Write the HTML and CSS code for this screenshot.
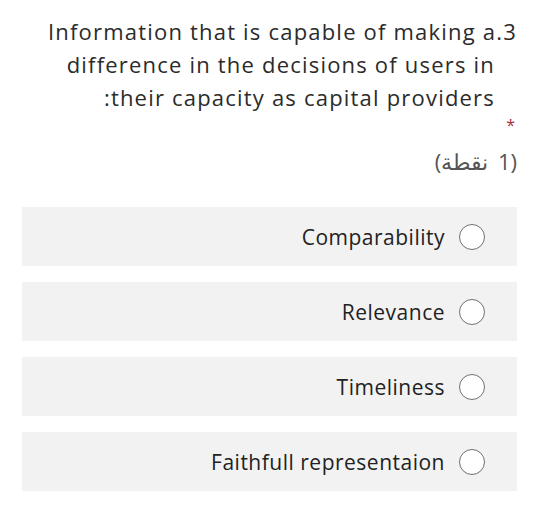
FILE: index.html
```html
<!DOCTYPE html>
<html lang="ar" dir="rtl">
<head>
<meta charset="utf-8">
<link rel="stylesheet" href="styles.css">
</head>
<body>
<div class="question">
  <div class="title">
    <span class="line first">3.Information that is capable of making a</span>
    <span class="line">difference in the decisions of users in</span>
    <span class="line">their capacity as capital providers:</span>
  </div>
  <div class="required">*</div>
  <div class="points">(1 نقطة)</div>
  <div class="options">
    <label class="option"><span class="radio"></span><span class="text">Comparability</span></label>
    <label class="option"><span class="radio"></span><span class="text">Relevance</span></label>
    <label class="option"><span class="radio"></span><span class="text">Timeliness</span></label>
    <label class="option"><span class="radio"></span><span class="text">Faithfull representaion</span></label>
  </div>
</div>
</body>
</html>
```
FILE: styles.css
```css
html, body {
  margin: 0;
  padding: 0;
  background: #ffffff;
}
body {
  font-family: "Open Sans", "Noto Sans", sans-serif;
  color: #2b2b2b;
}
.question {
  padding: 15px 23px 0 22px;
}
.title {
  font-size: 22px;
  line-height: 33px;
  letter-spacing: 1.2px;
  text-align: right;
}
.line {
  display: block;
}
.line:not(.first) {
  margin-right: 22px;
}
.required {
  color: #b2293b;
  font-size: 16px;
  line-height: 20px;
  margin-top: 1px;
  margin-right: 2px;
  height: 14px;
}
.points {
  font-size: 22px;
  line-height: 28px;
  letter-spacing: 2px;
  word-spacing: 4px;
  color: #555555;
  margin-top: 18px;
}
.options {
  display: flex;
  flex-direction: column;
  gap: 16px;
  margin-top: 32px;
}
.option {
  display: flex;
  align-items: center;
  gap: 14px;
  height: 59px;
  padding-right: 32px;
  background: #f2f2f2;
  font-size: 21px;
  color: #222222;
}
.radio {
  box-sizing: border-box;
  width: 26px;
  height: 26px;
  border: 1.5px solid #707070;
  border-radius: 50%;
  background: #ffffff;
  flex: none;
}
.text {
  direction: ltr;
  letter-spacing: 0.5px;
}
```
